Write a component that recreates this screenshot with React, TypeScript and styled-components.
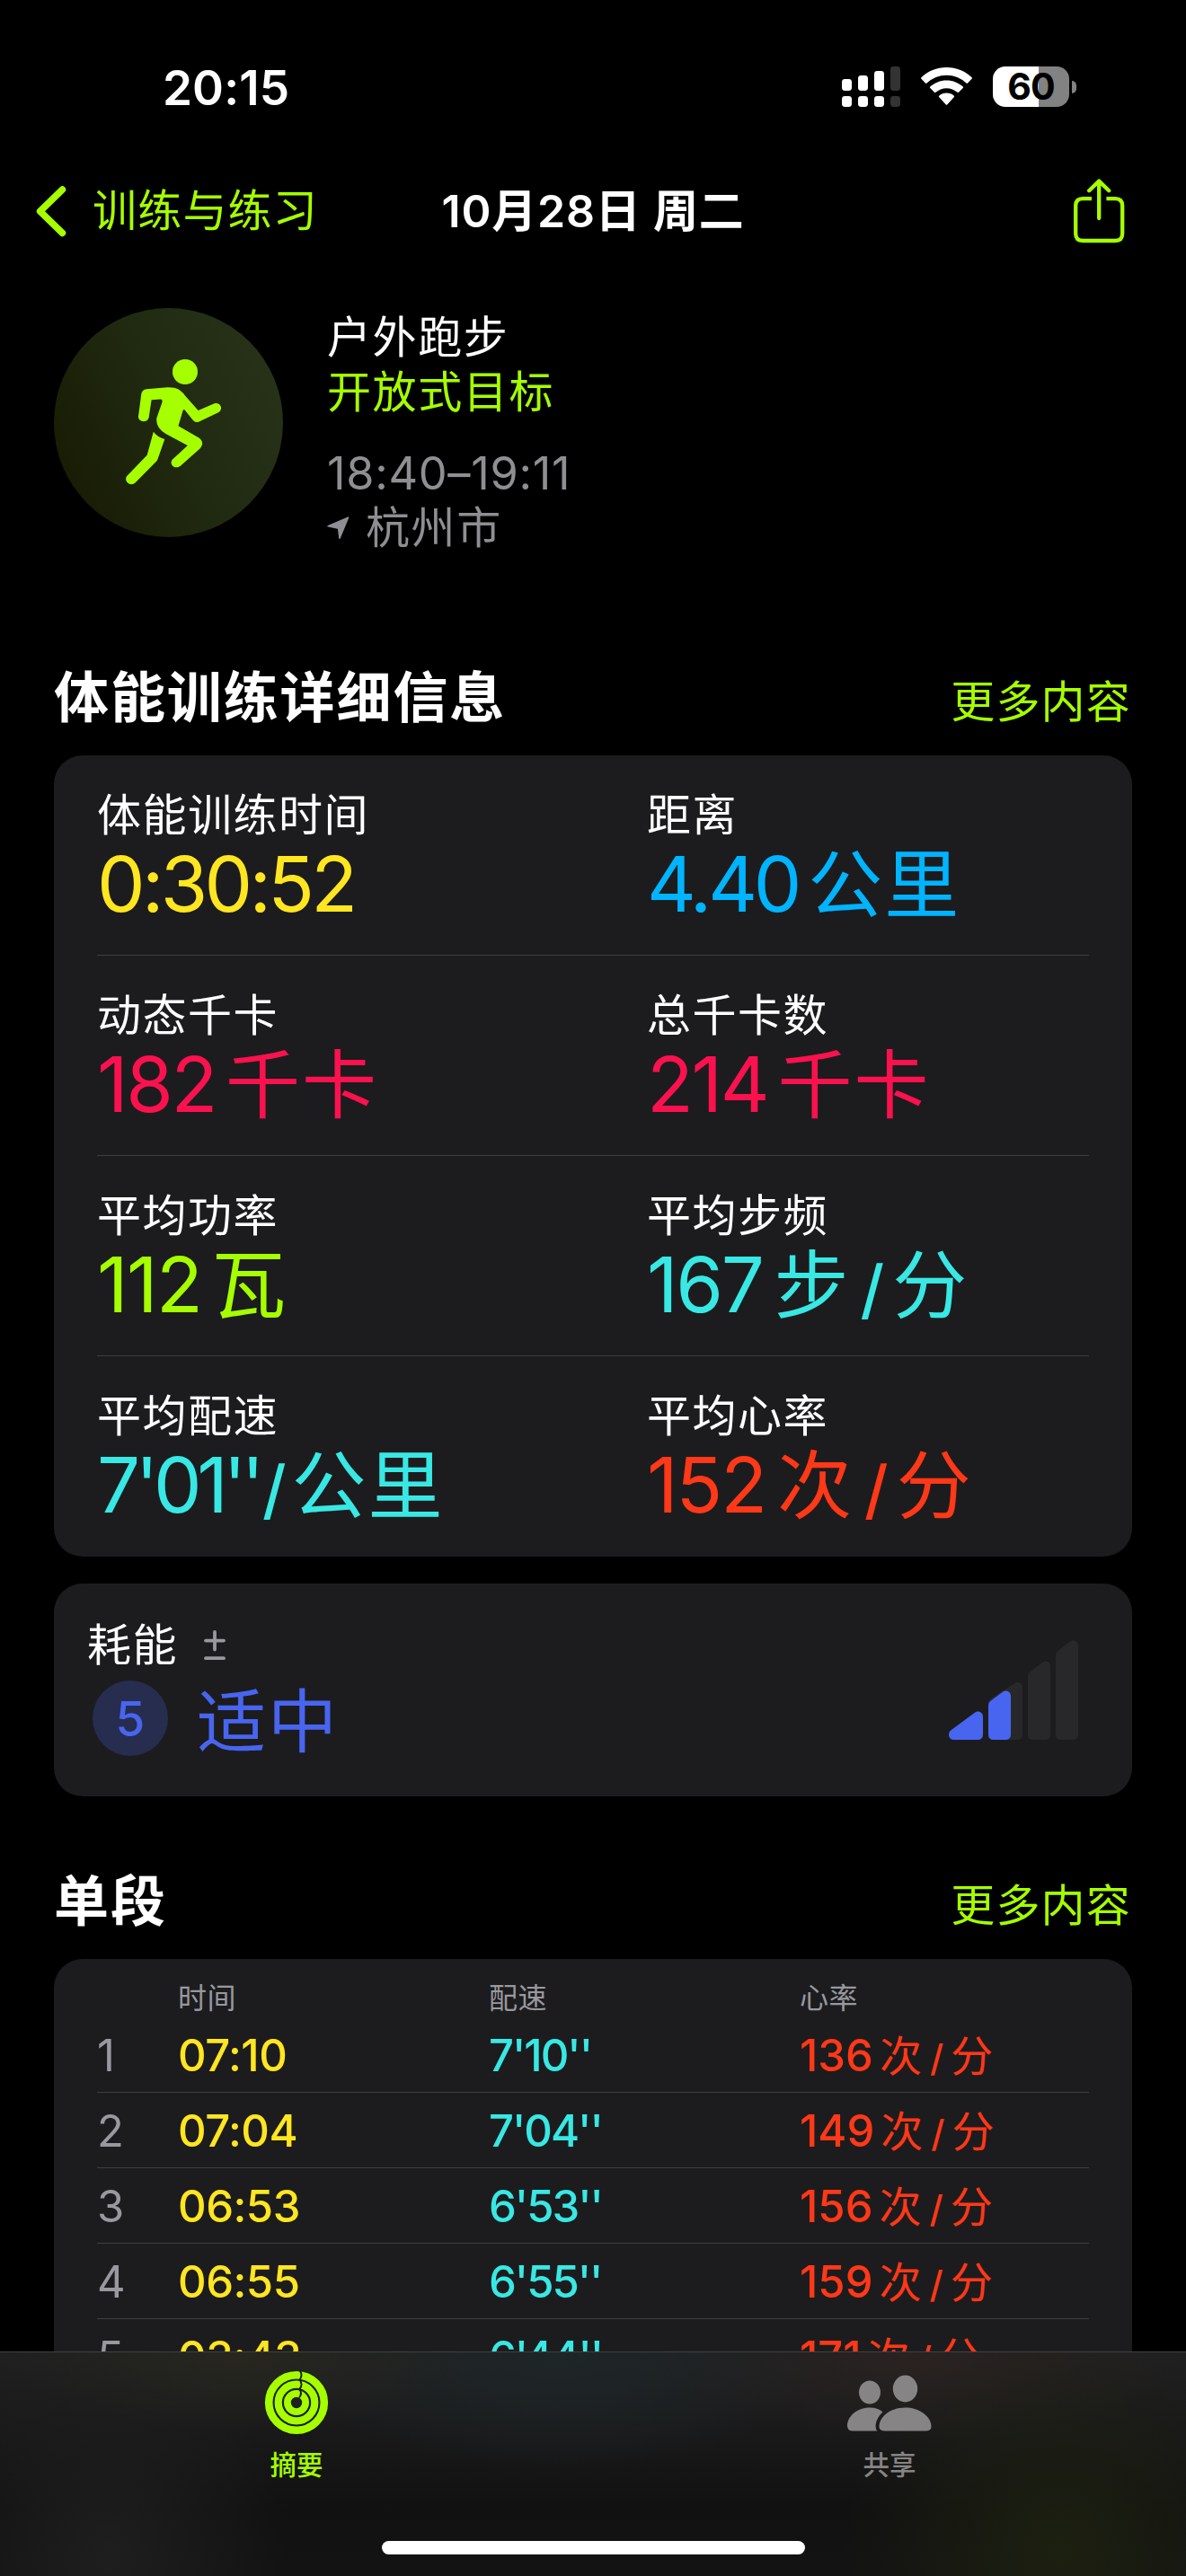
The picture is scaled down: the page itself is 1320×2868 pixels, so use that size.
import React from 'react';
import styled, { createGlobalStyle } from 'styled-components';

const LIME = '#a5ff00';
const YELLOW = '#ffe620';
const BLUE = '#00b4ff';
const PINK = '#fc114f';
const CYAN = '#38e8e4';
const RED = '#ff3817';
const INDIGO = '#4865f0';
const GRAY = '#8e8e93';

const Global = createGlobalStyle`
  * { box-sizing: border-box; }
  body {
    margin: 0;
    background: #000;
    font-family: Inter, "Noto Sans CJK SC", sans-serif;
    -webkit-font-smoothing: antialiased;
  }
`;

const Screen = styled.div`
  width: 1320px;
  height: 2868px;
  display: flex;
  flex-direction: column;
  background: #000;
  color: #fff;
  overflow: hidden;
  white-space: nowrap;
`;

const Content = styled.main`
  flex: 1;
  min-height: 0;
  overflow: hidden;
`;

/* Status bar */

const StatusBar = styled.header`
  height: 205px;
  padding: 68px 122px 0 181px;
  display: flex;
  justify-content: space-between;
  align-items: flex-start;
`;

const Clock = styled.div`
  font-size: 53px;
  line-height: 60px;
  font-weight: 600;
  letter-spacing: 0.1px;
`;

const StatusIcons = styled.div`
  display: flex;
  align-items: flex-start;
  padding-top: 6px;
`;

const SignalSvg = styled.svg`
  width: 65px;
  height: 45px;
  margin-right: 23px;
`;

const WifiSvg = styled.svg`
  width: 57px;
  height: 45px;
  margin-right: 23px;
`;

const Battery = styled.div`
  width: 85px;
  height: 45px;
  border-radius: 14px;
  background: linear-gradient(90deg, #fff 0 51px, #828282 51px);
  color: #000;
  font-size: 41px;
  line-height: 45px;
  font-weight: 700;
  letter-spacing: -1px;
  text-align: center;
`;

const BatteryNub = styled.div`
  width: 5px;
  height: 14px;
  margin: 16px 0 0 3px;
  border-radius: 0 5px 5px 0;
  background: #828282;
`;

/* Navigation */

const Nav = styled.nav`
  height: 60px;
  padding: 0 68px 0 40px;
  display: grid;
  grid-template-columns: 1fr auto 1fr;
  grid-template-rows: 60px;
  align-items: center;
  line-height: 60px;
`;

const BackButton = styled.div`
  display: flex;
  align-items: center;
  gap: 29px;
  color: ${LIME};
  font-size: 49px;
  letter-spacing: 1.2px;
`;

const Title = styled.div`
  font-size: 50px;
  font-weight: 600;
  letter-spacing: 0.8px;
  margin-left: 28px;
`;

const ShareButton = styled.div`
  justify-self: end;
  display: flex;
`;

/* Workout summary */

const Hero = styled.section`
  margin-top: 78px;
  padding-left: 60px;
  height: 275px;
  display: flex;
  gap: 49px;
`;

const Badge = styled.div`
  width: 255px;
  height: 255px;
  border-radius: 50%;
  background: linear-gradient(65deg, #171a02 5%, #202a10 50%, #28331a 95%);
`;

const HeroText = styled.div`
  padding-top: 2px;
  font-size: 49px;
  line-height: 61px;
  letter-spacing: 1.6px;
`;

const Goal = styled.div`
  color: ${LIME};
`;

const TimeRange = styled.div`
  margin-top: 29px;
  color: ${GRAY};
  font-size: 50.5px;
  letter-spacing: 0.7px;
`;

const Place = styled.div`
  display: flex;
  align-items: center;
  gap: 17px;
  color: ${GRAY};
`;

/* Sections */

const SectionHeader = styled.div<{ $top: number }>`
  margin: ${(p) => p.$top}px 61px 28px 60px;
  height: 72px;
  display: flex;
  justify-content: space-between;
  align-items: baseline;
`;

const Heading = styled.h2`
  margin: 0;
  font-size: 61px;
  line-height: 72px;
  font-weight: 700;
  letter-spacing: 1.9px;
`;

const MoreLink = styled.div`
  color: ${LIME};
  font-size: 49px;
  line-height: 72px;
  letter-spacing: 1.2px;
`;

const Card = styled.section`
  margin: 0 60px;
  border-radius: 32px;
  background: #1c1c1e;
`;

const Metrics = styled(Card)`
  padding: 0 48px;
  height: 892px;
`;

const MetricRow = styled.div`
  height: 223px;
  padding-top: 39px;
  display: grid;
  grid-template-columns: 612px 1fr;
  border-bottom: 1px solid #3e3e41;
  &:last-child {
    border-bottom: 0;
  }
`;

const MetricLabel = styled.div`
  font-size: 49px;
  line-height: 56px;
  letter-spacing: 1.5px;
`;

const MetricValue = styled.div<{ $color: string }>`
  margin-top: 4px;
  color: ${(p) => p.$color};
  display: flex;
  align-items: baseline;
  font-size: 85px;
  line-height: 90px;
`;

const Num = styled.span<{ $ls?: number }>`
  letter-spacing: ${(p) => p.$ls ?? -2.3}px;
`;

const Unit = styled.span<{ $ml?: number }>`
  font-size: 83px;
  letter-spacing: 2px;
  margin-left: ${(p) => p.$ml ?? 11}px;
`;

const Slash = styled.span<{ $ml: number }>`
  font-size: 72px;
  font-weight: 500;
  margin-left: ${(p) => p.$ml}px;
`;

/* Exertion */

const Exertion = styled(Card)`
  margin-top: 30px;
  height: 237px;
  padding: 0 60px 0 37px;
  display: flex;
  justify-content: space-between;
  align-items: center;
`;

const ExertionInfo = styled.div`
  align-self: flex-start;
  padding-top: 41px;
`;

const ExertionTitle = styled.div`
  display: flex;
  align-items: center;
  gap: 29px;
  font-size: 49px;
  line-height: 56px;
  letter-spacing: 1.5px;
`;

const ExertionLevel = styled.div`
  margin: 11px 0 0 6px;
  display: flex;
  gap: 32px;
  color: ${INDIGO};
`;

const LevelCircle = styled.div`
  width: 84px;
  height: 84px;
  border-radius: 50%;
  background: #262d4f;
  font-size: 53px;
  line-height: 86px;
  font-weight: 500;
  text-align: center;
`;

const LevelName = styled.div`
  padding-top: 4px;
  font-size: 77px;
  line-height: 84px;
  letter-spacing: 2px;
`;

/* Splits */

const Splits = styled(Card)`
  padding: 24px 48px 0;
`;

const SplitHead = styled.div`
  height: 41px;
  display: grid;
  grid-template-columns: 90px 346px 346px 1fr;
  color: #98989f;
  font-size: 32px;
  line-height: 40px;
  letter-spacing: 0.6px;
`;

const SplitRow = styled.div`
  height: 84px;
  padding-top: 2px;
  display: grid;
  grid-template-columns: 90px 346px 346px 1fr;
  border-bottom: 1px solid #3e3e41;
  font-size: 49px;
  line-height: 81px;
`;

const SplitCell = styled.div<{ $color: string; $weight?: number; $ls?: number }>`
  display: flex;
  align-items: baseline;
  color: ${(p) => p.$color};
  font-weight: ${(p) => p.$weight ?? 500};
  letter-spacing: ${(p) => p.$ls ?? -0.5}px;
`;

const SmallUnit = styled.span<{ $ml: number }>`
  font-size: 47px;
  font-weight: 400;
  letter-spacing: 0;
  margin-left: ${(p) => p.$ml}px;
`;

const SmallSlash = styled.span`
  font-size: 41px;
  margin-left: 9px;
`;

/* Tab bar */

const TabBar = styled.footer`
  height: 250px;
  border-top: 1px solid #404142;
  display: flex;
  flex-direction: column;
  align-items: center;
  background:
    radial-gradient(ellipse 240px 240px at 1180px 220px, #1c2010 0%, transparent 100%),
    radial-gradient(ellipse 200px 260px at 120px 230px, #1e1e1e 0%, transparent 100%),
    radial-gradient(ellipse 260px 90px at 260px 0, #27271f 0%, transparent 100%),
    radial-gradient(ellipse 300px 130px at 620px 0, #1e2628 0%, transparent 100%),
    radial-gradient(ellipse 300px 100px at 1020px 0, #2a2221 0%, transparent 100%),
    linear-gradient(#202021 0%, #181819 40%, #111 70%, #131313 100%);
`;

const Tabs = styled.div`
  width: 100%;
  height: 210px;
  display: grid;
  grid-template-columns: 1fr 1fr;
`;

const Tab = styled.div<{ $color: string }>`
  display: flex;
  flex-direction: column;
  align-items: center;
  padding-top: 20px;
  color: ${(p) => p.$color};
  font-size: 29.5px;
  line-height: 40px;
  font-weight: 500;
`;

const TabIcon = styled.svg`
  height: 72px;
  margin-bottom: 13px;
`;

const HomeIndicator = styled.div`
  width: 471px;
  height: 15px;
  border-radius: 8px;
  background: #fff;
`;

const Signal = () => (
  <SignalSvg viewBox="0 0 65 45">
    {[14, 10, 5, 0].map((y, i) => (
      <g key={i} fill={i === 3 ? '#333' : '#fff'}>
        <rect x={i * 18} y={y} width="11" height={27 - y} rx="3.4" />
        <rect x={i * 18} y="33" width="11" height="12" rx="3.4" />
      </g>
    ))}
  </SignalSvg>
);

const Wifi = () => (
  <WifiSvg viewBox="0 0 57 45" fill="#fff">
    <path d="M28.5 1C17.6 1 7.600 5.200 0.400 12.300Q-0.300 13 0.400 13.700L5 18.600Q5.700 19.300 6.500 18.600A31.500 31.500 0 0 1 50.500 18.600Q51.300 19.300 52 18.600L56.600 13.700Q57.300 13 56.600 12.300C49.400 5.200 39.400 1 28.500 1Z" />
    <path d="M28.500 15.500C21.500 15.500 15 18.200 10.200 22.600Q9.500 23.300 10.200 24L15 28.800Q15.600 29.400 16.400 28.800A18 18 0 0 1 40.600 28.800Q41.400 29.400 42 28.800L46.800 24Q47.500 23.300 46.800 22.600C42 18.200 35.500 15.500 28.500 15.500Z" />
    <path d="M28.500 29.600C25.300 29.600 22.400 30.800 20.100 32.800Q19.500 33.400 20.100 34.100L27.600 42.300Q28.500 43.300 29.400 42.300L36.900 34.100Q37.500 33.400 36.900 32.800C34.600 30.800 31.700 29.600 28.500 29.600Z" />
  </WifiSvg>
);

const Chevron = () => (
  <svg width="34" height="58" viewBox="0 0 34 58" fill="none" stroke={LIME} strokeWidth="7.500" strokeLinecap="round" strokeLinejoin="round">
    <path d="M29.500 5L4.600 29.300L29.500 53.500" />
  </svg>
);

const Share = () => (
  <svg width="57" height="72" viewBox="0 0 57 72" fill="none" stroke={LIME} strokeWidth="4.300" strokeLinecap="round" strokeLinejoin="round">
    <path d="M20 22.200H10.200Q2.200 22.200 2.200 30.200V61Q2.200 69 10.200 69H46.200Q54.200 69 54.200 61V30.200Q54.200 22.200 46.200 22.200H36.400" strokeLinecap="butt" />
    <path d="M28.200 44V3M17.200 13.200L28.200 2.600L39.200 13.200" />
  </svg>
);

const Runner = () => (
  <svg width="255" height="255" viewBox="0 0 255 255" fill={LIME}>
    <circle cx="146" cy="71" r="14" />
    <path d="M126 88.300C136 87.800 141.500 91 146 97.500L160.600 114L178 106.500C185 104 189 112 183.500 116L161.500 126.500Q157.500 128.300 154.500 124.500L145.500 113.200Q144.300 112.300 143.600 114L138.500 131.300L161.500 144.500Q168 149.500 163 156L140.500 176C135 180 128 174.500 131.500 169L148.800 153L125 140.300Q112.500 133 114.500 122L120.600 104.500Q121 101.500 118.500 101.600L108.600 102.200L105.800 121C105 128.500 93.300 127.500 94 120.500L97.300 95.500Q98 91 103 90.300Z" />
    <path d="M110.800 137.700Q115 143.500 123.300 145.900L115.600 168Q115 170 113.500 171.200L90.500 194.500C84.500 199.500 77 192 81.500 186.700L103.700 163.700Z" />
  </svg>
);

const LocationArrow = () => (
  <svg width="26" height="26" viewBox="0 0 26 26">
    <path d="M1.200 10.800L23.500 1.200L14 24.200L12.600 13.200Z" fill={GRAY} stroke={GRAY} strokeWidth="1.600" strokeLinejoin="round" />
  </svg>
);

const PlusMinus = () => (
  <svg width="24" height="34" viewBox="0 0 24 34" stroke="#98989f" strokeWidth="3.800" strokeLinecap="round">
    <path d="M12 2V21.500M2 11.600H22M2 31.200H22" />
  </svg>
);

const EffortBars = () => (
  <svg width="144" height="111" viewBox="0 0 144 111" strokeWidth="11" strokeLinejoin="round">
    <g fill="#28282a" stroke="#28282a">
      <path d="M49.500 70L76.500 52.500V105.500H49.500Z" />
      <path d="M93.500 40L107.500 29V105.500H93.500Z" />
      <path d="M124.500 16.500L138.500 5.800V105.500H124.500Z" />
    </g>
    <g fill={INDIGO} stroke={INDIGO}>
      <path d="M5.500 105.500V105L32.500 85V105.500Z" />
      <path d="M49.500 72.500L63.500 62V105.500H49.500Z" />
    </g>
  </svg>
);

const Rings = () => (
  <TabIcon width="72" viewBox="-36 -36 72 72" fill="none">
    <circle r="30.800" stroke={LIME} strokeWidth="8.600" />
    <circle r="20.300" stroke={LIME} strokeWidth="8.200" />
    <circle r="10.100" stroke={LIME} strokeWidth="7.800" />
    <g stroke="#1b1b1b" strokeWidth="1.900">
      <path d="M3.500 -36Q7.500 -30.500 3.500 -25.500" />
      <path d="M3.500 -25.500Q7.500 -20 3.500 -15.500" />
      <path d="M3 -15.500Q7 -10.500 3 -5.500" />
    </g>
  </TabIcon>
);

const People = () => (
  <TabIcon width="94" viewBox="0 0 94 72" fill="#868484">
    <ellipse cx="25" cy="24.500" rx="12" ry="13" />
    <ellipse cx="64.500" cy="20.500" rx="13.700" ry="15" />
    <path d="M25 41.500C31 41.500 36 43.300 39.500 46.500C34.500 51 31.800 56.500 31.600 62.500Q31.600 66 33.500 67.500H6.500Q0 67.500 0 62C0 51.500 10.500 41.500 25 41.500Z" />
    <path d="M64.500 41.500C82 41.500 93.500 52.500 93.500 62.500Q93.500 67.500 87 67.500H42Q35.500 67.500 35.500 62.500C35.500 52.500 47 41.500 64.500 41.500Z" />
  </TabIcon>
);

interface Metric {
  label: string;
  color: string;
  value: React.ReactNode;
}

const metrics: [Metric, Metric][] = [
  [
    { label: '体能训练时间', color: YELLOW, value: <Num $ls={-3.7}>0:30:52</Num> },
    { label: '距离', color: BLUE, value: <><Num $ls={-4.2}>4.40</Num><Unit>公里</Unit></> },
  ],
  [
    { label: '动态千卡', color: PINK, value: <><Num>182</Num><Unit>千卡</Unit></> },
    { label: '总千卡数', color: PINK, value: <><Num>214</Num><Unit>千卡</Unit></> },
  ],
  [
    { label: '平均功率', color: LIME, value: <><Num $ls={-1.6}>112</Num><Unit>瓦</Unit></> },
    { label: '平均步频', color: CYAN, value: <><Num>167</Num><Unit $ml={13}>步</Unit><Slash $ml={11}>/</Slash><Unit $ml={9}>分</Unit></> },
  ],
  [
    { label: '平均配速', color: CYAN, value: <><Num $ls={-5.3}>7'01''</Num><Slash $ml={3}>/</Slash><Unit $ml={6}>公里</Unit></> },
    { label: '平均心率', color: RED, value: <><Num $ls={-2}>152</Num><Unit $ml={13}>次</Unit><Slash $ml={12}>/</Slash><Unit $ml={9}>分</Unit></> },
  ],
];

const splits = [
  { time: '07:10', pace: "7'10''", bpm: 136 },
  { time: '07:04', pace: "7'04''", bpm: 149 },
  { time: '06:53', pace: "6'53''", bpm: 156 },
  { time: '06:55', pace: "6'55''", bpm: 159 },
  { time: '03:43', pace: "6'44''", bpm: 171 },
];

export default function App() {
  return (
    <>
      <Global />
      <Screen>
        <Content>
          <StatusBar>
            <Clock>20:15</Clock>
            <StatusIcons>
              <Signal />
              <Wifi />
              <Battery>60</Battery>
              <BatteryNub />
            </StatusIcons>
          </StatusBar>

          <Nav>
            <BackButton>
              <Chevron />
              训练与练习
            </BackButton>
            <Title>10月28日 周二</Title>
            <ShareButton>
              <Share />
            </ShareButton>
          </Nav>

          <Hero>
            <Badge>
              <Runner />
            </Badge>
            <HeroText>
              <div>户外跑步</div>
              <Goal>开放式目标</Goal>
              <TimeRange>18:40–19:11</TimeRange>
              <Place>
                <LocationArrow />
                杭州市
              </Place>
            </HeroText>
          </Hero>

          <SectionHeader $top={123}>
            <Heading>体能训练详细信息</Heading>
            <MoreLink>更多内容</MoreLink>
          </SectionHeader>
          <Metrics>
            {metrics.map((row, i) => (
              <MetricRow key={i}>
                {row.map((m) => (
                  <div key={m.label}>
                    <MetricLabel>{m.label}</MetricLabel>
                    <MetricValue $color={m.color}>{m.value}</MetricValue>
                  </div>
                ))}
              </MetricRow>
            ))}
          </Metrics>

          <Exertion>
            <ExertionInfo>
              <ExertionTitle>
                耗能
                <PlusMinus />
              </ExertionTitle>
              <ExertionLevel>
                <LevelCircle>5</LevelCircle>
                <LevelName>适中</LevelName>
              </ExertionLevel>
            </ExertionInfo>
            <EffortBars />
          </Exertion>

          <SectionHeader $top={81}>
            <Heading>单段</Heading>
            <MoreLink>更多内容</MoreLink>
          </SectionHeader>
          <Splits>
            <SplitHead>
              <span />
              <span>时间</span>
              <span>配速</span>
              <span>心率</span>
            </SplitHead>
            {splits.map((s, i) => (
              <SplitRow key={s.time}>
                <SplitCell $color="#98989f" $weight={400}>{i + 1}</SplitCell>
                <SplitCell $color={YELLOW}>{s.time}</SplitCell>
                <SplitCell $color={CYAN} $ls={-2}>{s.pace}</SplitCell>
                <SplitCell $color={RED} $ls={0}>
                  {s.bpm}
                  <SmallUnit $ml={7}>次</SmallUnit>
                  <SmallSlash>/</SmallSlash>
                  <SmallUnit $ml={8}>分</SmallUnit>
                </SplitCell>
              </SplitRow>
            ))}
          </Splits>
        </Content>

        <TabBar>
          <Tabs>
            <Tab $color={LIME}>
              <Rings />
              摘要
            </Tab>
            <Tab $color="#868484">
              <People />
              共享
            </Tab>
          </Tabs>
          <HomeIndicator />
        </TabBar>
      </Screen>
    </>
  );
}
